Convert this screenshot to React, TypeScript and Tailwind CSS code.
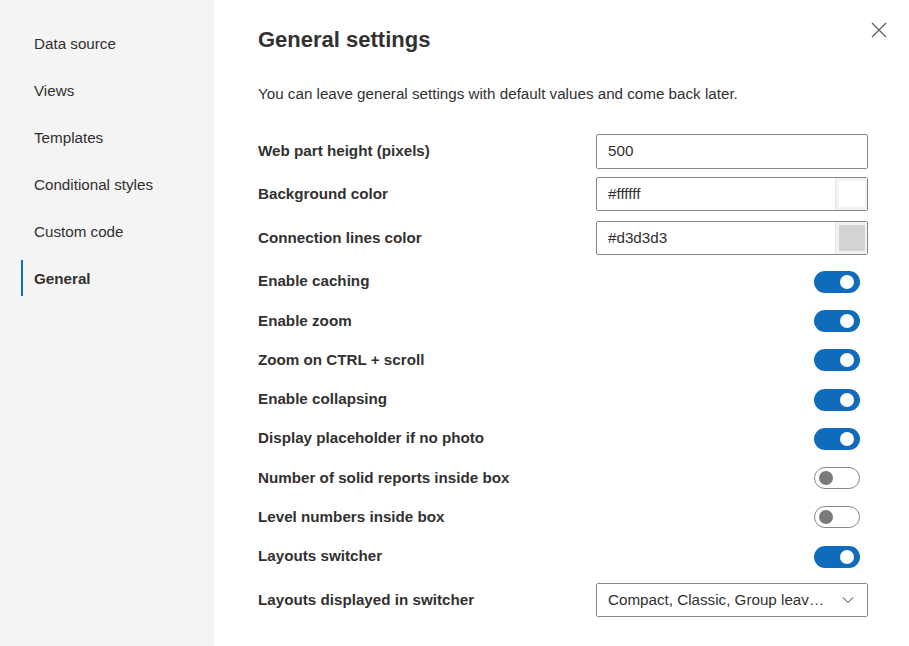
import React from "react";

const navItems = [
  "Data source",
  "Views",
  "Templates",
  "Conditional styles",
  "Custom code",
  "General",
];

const toggles: { label: string; on: boolean }[] = [
  { label: "Enable caching", on: true },
  { label: "Enable zoom", on: true },
  { label: "Zoom on CTRL + scroll", on: true },
  { label: "Enable collapsing", on: true },
  { label: "Display placeholder if no photo", on: true },
  { label: "Number of solid reports inside box", on: false },
  { label: "Level numbers inside box", on: false },
  { label: "Layouts switcher", on: true },
];

const Toggle = ({ on }: { on: boolean }) =>
  on ? (
    <div className="w-[46px] h-[22px] rounded-full bg-[#0f6cbd] flex items-center justify-end pr-[6px]">
      <div className="w-[14px] h-[14px] rounded-full bg-white" />
    </div>
  ) : (
    <div className="w-[46px] h-[22px] rounded-full border border-[#8a8886] bg-white flex items-center pl-[4px]">
      <div className="w-[14px] h-[14px] rounded-full bg-[#7a7a7a]" />
    </div>
  );

const ColorField = ({ value }: { value: string }) => (
  <div className="w-[272px] h-[34px] border border-[#8a8886] rounded-[2px] flex bg-white">
    <div className="flex-1 flex items-center pl-[11px] text-[15.2px]">{value}</div>
    <div className="w-[32px] h-full bg-[#f3f2f1] border-l border-[#e6e6e6] flex items-center justify-center">
      <div className="w-[26px] h-[26px]" style={{ backgroundColor: value }} />
    </div>
  </div>
);

export default function App() {
  return (
    <div
      className="w-[909px] h-[646px] flex text-[#323130] overflow-hidden"
      style={{ fontFamily: '"Liberation Sans", Arial, sans-serif' }}
    >
      <nav className="w-[214px] h-full bg-[#f4f4f4] pt-[21px] flex flex-col">
        {navItems.map((item) => {
          const active = item === "General";
          return (
            <div key={item} className="relative h-[47px] flex items-center pl-[34px] text-[15.2px]">
              {active && (
                <div className="absolute left-[21px] top-[4px] w-[2px] h-[36px] bg-[#0f6cbd]" />
              )}
              <span className={active ? "font-bold" : ""}>{item}</span>
            </div>
          );
        })}
      </nav>

      <main className="relative flex-1 pl-[44px] pr-[41px] pt-[26px]">
        <button className="absolute right-[22px] top-[22px] w-[16px] h-[16px] flex items-center justify-center text-[#5f5f5f]">
          <svg width="16" height="16" viewBox="0 0 16 16" fill="none" stroke="currentColor" strokeWidth="1.3">
            <path d="M1 1L15 15M15 1L1 15" />
          </svg>
        </button>

        <h1 className="text-[22px] leading-[28px] font-bold">General settings</h1>
        <p className="mt-[30px] text-[15.2px] leading-[20px]">
          You can leave general settings with default values and come back later.
        </p>

        <div className="mt-[30px] flex flex-col">
          <div className="h-[35px] flex items-center justify-between">
            <span className="text-[15.2px] font-bold">Web part height (pixels)</span>
            <div className="w-[272px] h-[35px] border border-[#8a8886] rounded-[2px] flex items-center pl-[11px] text-[15.2px]">
              500
            </div>
          </div>
          <div className="mt-[8px] h-[34px] flex items-center justify-between">
            <span className="text-[15.2px] font-bold">Background color</span>
            <ColorField value="#ffffff" />
          </div>
          <div className="mt-[10px] h-[34px] flex items-center justify-between">
            <span className="text-[15.2px] font-bold">Connection lines color</span>
            <ColorField value="#d3d3d3" />
          </div>

          <div className="mt-[7px] flex flex-col">
            {toggles.map((t) => (
              <div key={t.label} className="h-[39.3px] flex items-center justify-between pr-[8px]">
                <span className="text-[15.2px] font-bold">{t.label}</span>
                <Toggle on={t.on} />
              </div>
            ))}
          </div>

          <div className="mt-[7px] h-[34px] flex items-center justify-between">
            <span className="text-[15.2px] font-bold">Layouts displayed in switcher</span>
            <div className="w-[272px] h-[34px] border border-[#8a8886] rounded-[2px] flex items-center pl-[11px] pr-[13px] text-[15.2px]">
              <span className="flex-1 truncate pr-[12px]">Compact, Classic, Group leaves, Tree</span>
              <svg width="12" height="12" viewBox="0 0 12 12" fill="none" stroke="#323130" strokeWidth="1">
                <path d="M1 3.5L6 8.5L11 3.5" />
              </svg>
            </div>
          </div>
        </div>
      </main>
    </div>
  );
}
